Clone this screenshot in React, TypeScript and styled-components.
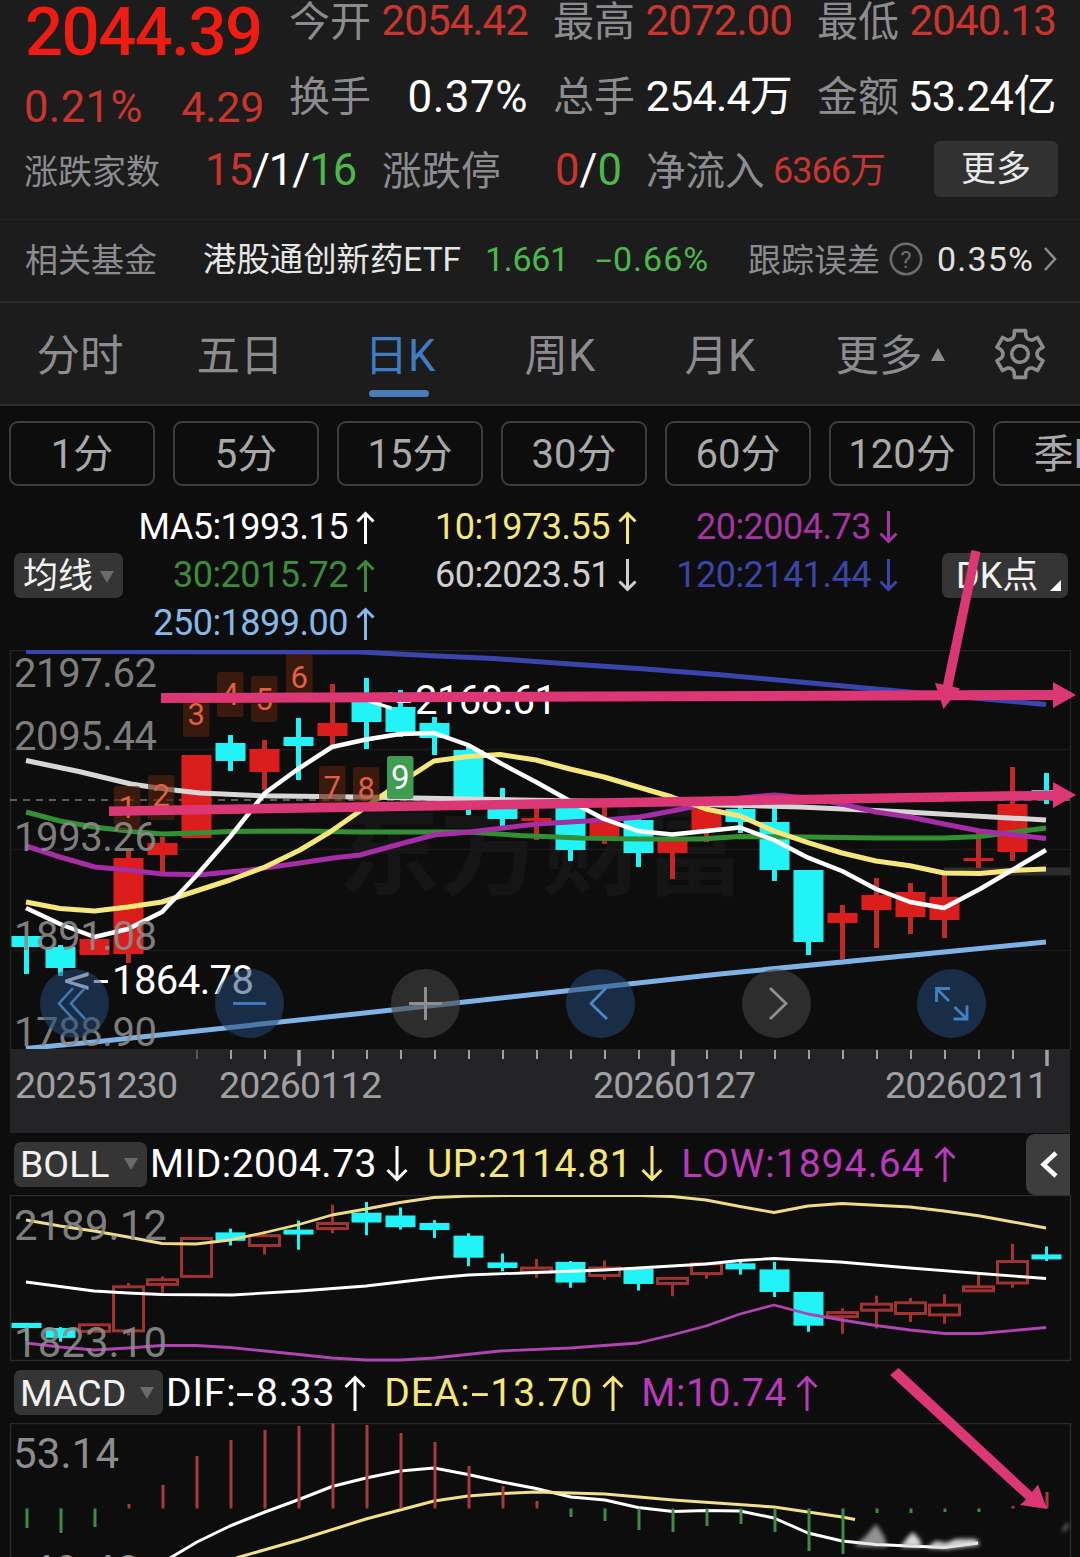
import React from 'react';
import styled, { createGlobalStyle } from 'styled-components';

const RED = '#c8352f';
const GREEN = '#4cb84c';
const CYAN = '#22f3f6';
const YELLOW = '#f5e77a';
const PURPLE = '#a52da5';
const PINK = '#dc3775';
const FONT = "Roboto, 'Noto Sans CJK SC', sans-serif";

const GlobalStyle = createGlobalStyle`
  * { box-sizing: border-box; }
  html, body { margin: 0; padding: 0; background: #0d0d0d; }
  body { width: 1080px; height: 1557px; overflow: hidden; font-family: ${FONT}; }
`;

const Page = styled.main`
  position: relative;
  width: 1080px;
  height: 1557px;
  overflow: hidden;
  background: #0d0d0d;
`;

const Txt = styled.span<{ $c?: string; $s?: number; $ls?: number; $w?: number }>`
  display: inline-block;
  white-space: nowrap;
  line-height: 1;
  color: ${(p) => p.$c ?? '#8c8c90'};
  font-size: ${(p) => p.$s ?? 41}px;
  letter-spacing: ${(p) => p.$ls ?? 0}px;
  font-weight: ${(p) => p.$w ?? 400};
`;
const Label = styled(Txt)<{ $drop?: number }>`
  padding-top: ${(p) => p.$drop ?? 2}px;
`;
/* hyphen stretched to the width of a digit */
const Minus = styled.span`
  display: inline-block;
  width: 0.5em;
  text-align: center;
  transform: scaleX(1.7);
`;

/* ---------- quote header ---------- */
const Quote = styled.section`
  height: 220px;
  background: #1c1c1c;
  border-bottom: 1px solid #232323;
  overflow: hidden;
`;
const QuoteTop = styled.div`
  display: flex;
  height: 132px;
  padding: 0 24px;
`;
const PriceColumn = styled.div`
  width: 265px;
  flex: none;
`;
const Price = styled.div`
  height: 70px;
  padding-left: 1px;
  line-height: 64px;
  font-size: 67px;
  font-weight: 500;
  letter-spacing: -1.5px;
  color: #ee1c12;
`;
const ChangeRow = styled.div`
  display: flex;
  justify-content: space-between;
  width: 240px;
  padding-top: 16px;
`;
const StatGrid = styled.div`
  display: grid;
  grid-template-columns: repeat(3, 239px);
  grid-template-rows: 58px 76px;
  column-gap: 25px;
`;
const Stat = styled.div<{ $first?: boolean }>`
  display: flex;
  justify-content: space-between;
  align-items: flex-start;
  padding-top: ${(p) => (p.$first ? 0 : 17)}px;
`;
const CountRow = styled.div`
  display: flex;
  align-items: center;
  height: 78px;
  padding-left: 24px;
`;
const Cell = styled.div<{ $w: number; $right?: boolean }>`
  display: flex;
  align-items: center;
  justify-content: ${(p) => (p.$right ? 'flex-end' : 'flex-start')};
  width: ${(p) => p.$w}px;
  flex: none;
`;
const MoreButton = styled.button`
  width: 124px;
  height: 56px;
  margin: 0 0 5px 49px;
  padding: 2px 0 0;
  border: 0;
  border-radius: 6px;
  background: #313131;
  color: #e8e8e8;
  font: 400 35px/54px ${FONT};
`;

/* ---------- related fund ---------- */
const FundRow = styled.section`
  display: flex;
  align-items: center;
  height: 83px;
  padding: 0 0 3px 25px;
  background: #1c1c1c;
  border-bottom: 2px solid #2a2a2a;
`;

/* ---------- tabs ---------- */
const Tabs = styled.nav`
  display: grid;
  grid-template-columns: repeat(5, 160px) 180px 80px;
  height: 103px;
  background: #1c1c1c;
  border-bottom: 2px solid #2f2f2f;
`;
const Tab = styled.div<{ $on?: boolean }>`
  display: flex;
  flex-direction: column;
  align-items: center;
  padding-top: 32px;
  font-size: 43.5px;
  line-height: 44px;
  color: ${(p) => (p.$on ? '#3f7cc0' : '#8c8c90')};
`;
const TabLine = styled.i`
  width: 60px;
  height: 7px;
  margin: 11px 0 0 -2px;
  border-radius: 4px;
  background: #4a7db8;
`;
const MoreTab = styled(Tab)`
  flex-direction: row;
  align-items: flex-start;
  justify-content: center;
  gap: 8px;
`;
const UpMark = styled.i`
  margin-top: 13px;
  border: 7.5px solid transparent;
  border-top: 0;
  border-bottom: 13px solid #8c8c90;
`;
const GearCell = styled.div`
  display: flex;
  justify-content: center;
  padding-top: 25px;
`;

/* ---------- periods ---------- */
const Periods = styled.div`
  display: flex;
  gap: 18px;
  height: 97px;
  padding: 15px 0 0 9px;
`;
const Pill = styled.button`
  flex: none;
  width: 146px;
  height: 65px;
  padding: 2px 0 0;
  border: 2px solid #3d3d3d;
  border-radius: 9px;
  background: transparent;
  color: #a9a9ab;
  font: 400 40px/58px ${FONT};
  text-align: center;
`;

/* ---------- moving averages ---------- */
const MaBlock = styled.section`
  display: grid;
  grid-template-columns: 123px 252px 262px 261px 170px;
  grid-template-rows: repeat(3, 48px);
  height: 147px;
`;
const MaCell = styled.div<{ $col: number; $row: number }>`
  grid-column: ${(p) => p.$col};
  grid-row: ${(p) => p.$row};
  display: flex;
  align-items: center;
  justify-content: flex-end;
`;
const ArrowBox = styled.span<{ $c: string }>`
  display: flex;
  align-items: center;
  color: ${(p) => p.$c};
`;
const ArrowGlyph = styled.svg<{ $up?: boolean; $gap: number }>`
  margin-left: ${(p) => p.$gap}px;
  transform: ${(p) => (p.$up ? 'none' : 'rotate(180deg)')};
`;
const DropButton = styled.button<{ $w: number; $cjk?: boolean }>`
  display: flex;
  align-items: center;
  justify-content: space-between;
  width: ${(p) => p.$w}px;
  height: 45px;
  flex: none;
  padding: ${(p) => (p.$cjk ? '2px 9px 0 9px' : '0 9px 0 6px')};
  border: 0;
  border-radius: 7px;
  background: #353535;
  color: #f2f2f2;
  font: 400 ${(p) => (p.$cjk ? 35 : 37.5)}px/42px ${FONT};
`;
const DkButton = styled(DropButton)`
  padding: 0 7px 0 14px;
  font-size: 36px;
`;
const MaMenu = styled.div`
  grid-column: 1;
  grid-row: 2;
  padding: 2px 0 0 14px;
`;
const DkMenu = styled.div`
  grid-column: 5;
  grid-row: 2;
  padding: 2px 0 0 44px;
`;
const DownMark = styled.i`
  border: 7px solid transparent;
  border-bottom: 0;
  border-top: 12px solid #6b6b6b;
`;
const CornerMark = styled.i`
  align-self: flex-end;
  margin-bottom: 7px;
  border-left: 11px solid transparent;
  border-bottom: 11px solid #fff;
`;

/* ---------- charts ---------- */
const Plot = styled.svg`
  display: block;
  font-family: ${FONT};
`;
const MainChart = styled.section`
  position: relative;
  height: 399px;
`;
const Controls = styled.div`
  position: absolute;
  left: 40px;
  top: 319px;
  width: 946px;
  display: flex;
  justify-content: space-between;
`;
const Round = styled.button<{ $blue?: boolean }>`
  width: 69px;
  height: 69px;
  padding: 0;
  border: 0;
  border-radius: 50%;
  background: ${(p) => (p.$blue ? 'rgba(36,74,118,.55)' : 'rgba(66,66,68,.6)')};
`;
const Axis = styled.section`
  height: 84px;
  margin: 0 10px;
  background: #242427;
`;
const Dates = styled.div`
  display: flex;
  padding: 0 0 0 5px;
`;
const DateText = styled.span<{ $gap?: number }>`
  margin-left: ${(p) => p.$gap ?? 0}px;
  width: 161px;
  white-space: nowrap;
  font-size: 37.5px;
  line-height: 38px;
  letter-spacing: -0.8px;
  color: #a0a0a3;
`;
const IndicatorBar = styled.section<{ $h: number }>`
  display: flex;
  align-items: center;
  height: ${(p) => p.$h}px;
  padding-left: 14px;
`;
const Reading = styled.div<{ $c: string; $gap: number; $ls?: number }>`
  display: flex;
  align-items: center;
  margin-left: ${(p) => p.$gap}px;
  font-size: 39px;
  line-height: 44px;
  letter-spacing: ${(p) => p.$ls ?? 0}px;
  white-space: nowrap;
  color: ${(p) => p.$c};
`;
const Collapse = styled.button`
  align-self: flex-start;
  width: 44px;
  height: 61px;
  margin: 1px 10px 0 auto;
  padding: 0;
  border: 0;
  border-radius: 9px 0 0 9px;
  background: #3d3d3d;
`;
const Annotations = styled.svg`
  position: absolute;
  left: 0;
  top: 0;
  pointer-events: none;
`;

const TrendArrow = ({ up, c, big }: { up?: boolean; c: string; big?: boolean }) => {
  const w = big ? 22 : 19;
  const h = big ? 36 : 33;
  return (
    <ArrowBox $c={c}>
      <ArrowGlyph $up={up} $gap={big ? 9 : 8} width={w} height={h} viewBox={`0 0 ${w} ${h}`} fill="none" stroke="currentColor" strokeWidth={3}>
        <path d={`M${w / 2} ${h}V3M1.5 ${w / 2 + 1}L${w / 2} 2.5L${w - 1.5} ${w / 2 + 1}`} />
      </ArrowGlyph>
    </ArrowBox>
  );
};

/* six-toothed gear with shallow curved valleys */
const gearPath = () => {
  const at = (deg: number, r: number) => {
    const t = (deg * Math.PI) / 180;
    return `${(26 + r * Math.cos(t)).toFixed(2)} ${(26 + r * Math.sin(t)).toFixed(2)}`;
  };
  let d = '';
  for (let i = 0; i < 6; i++) {
    const a = -90 + i * 60;
    d += `${i ? 'L' : 'M'}${at(a - 18, 19)}L${at(a - 13.5, 24)}L${at(a + 13.5, 24)}L${at(a + 18, 19)}Q${at(a + 30, 15.5)} ${at(a + 42, 19)}`;
  }
  return `${d}Z`;
};

/* up flag, body top, body bottom, wick top, wick bottom */
type Candle = [number, number, number, number, number];
const candles: Candle[] = [
  [0, 936, 947, 936, 974], [0, 947, 968, 945, 976], [1, 939, 955, 939, 955], [1, 858, 954, 851, 963],
  [1, 843, 855, 837, 872], [1, 755, 838, 755, 838], [0, 743, 761, 735, 771], [1, 749, 772, 740, 790],
  [0, 737, 746, 718, 780], [1, 723, 736, 684, 745], [0, 701, 722, 678, 749], [0, 707, 732, 690, 737],
  [0, 723, 738, 717, 755], [0, 750, 797, 745, 815], [0, 807, 819, 788, 826], [1, 818, 821, 800, 840],
  [0, 806, 850, 804, 861], [1, 818, 836, 803, 844], [0, 820, 853, 818, 867], [1, 840, 853, 838, 879],
  [1, 809, 832, 806, 842], [0, 809, 822, 805, 833], [0, 822, 870, 806, 881], [0, 870, 942, 870, 955],
  [1, 913, 923, 905, 959], [1, 895, 910, 878, 948], [1, 892, 917, 883, 934], [1, 897, 920, 875, 938],
  [1, 858, 861, 833, 868], [1, 804, 852, 767, 861], [0, 790, 793, 773, 804],
];
const cx = (i: number) => 26.5 + 34 * i;
const by = (v: number) => 1238 + (v - 755) * 0.469;

const ma = {
  m120: '26,651.5 360,652 427,655.5 493,658.5 570,664 645,669 720,674.7 887,690 1046,704.5',
  m60: '26,760.5 80,771.7 131,784 165,789 200,793 260,795.7 360,797 520,800 640,802 720,805 800,807 907,812 1046,820',
  m30: '26,812 60,821 94,827 128,831 162,834 196,833 230,831.5 300,831 360,832 468,832 520,835.5 580,838 640,839 700,839 740,836.5 808,837 876,838 944,838 980,836.5 1046,828',
  m20: '26,846 60,857 95,867 128,870 162,874 200,874.7 250,870 300,863 333,858 360,855 400,844 434,835 470,832 503,828 536,824 570,822 604,820 640,817 672,811 706,804 740,798 774,795 808,798 842,804 876,812 910,817 944,824 980,831 1046,838.5',
  m10: '26,902 60,908.5 94.5,911 128,907 162,902 196,891 230,880 265,867 300,850 330,832 360,811 400,783 434,761 468,756.5 500,754.5 536,760 570,769 604,777 638,787 672,797 706,809 740,816 774,831 808,842.7 842,853 876,861 910,865.7 944,873 980,873.5 1013,870.5 1046,869',
  m5: '26,908 60,924 94.5,937 128,929 162,912 196,876 230,837 265,793 298,769 332,747 366,739.5 400,734 434,733 468,745 502,764 536,782 570,801 604,819 638,831 672,834.5 706,831 740,827.5 774,840 808,857.7 842,871 876,889 910,902 944,908 980,889 1046,850',
  m250: '26,1048.5 94,1042 360,1013.5 720,974 1046,942',
};

const boll = {
  up: '26,1220 60,1226 94,1231 128,1237 162,1243.5 196,1244 230,1240 265,1232.5 299,1224.5 332,1215 366,1209 400,1202.5 434,1197.5 468,1196 536,1195.5 640,1195.5 672,1196.5 706,1200 740,1206.5 774,1212.5 808,1206 842,1203.5 910,1207 944,1211 980,1216 1013,1222 1046,1228',
  mid: '26,1282 60,1286.5 94,1291 128,1293 162,1294.5 232,1295 300,1291 366,1286 434,1278 468,1275 536,1272.5 604,1270 638,1268 672,1266 706,1264 740,1260.5 774,1258.5 840,1262 910,1268 980,1273.5 1046,1278.5',
  low: '26,1343 60,1347 94,1350 128,1348 162,1345.5 196,1345.5 230,1347.5 265,1351 299,1354.5 332,1358 366,1360 400,1360 434,1358 500,1351 570,1348 638,1343 672,1335 706,1326 740,1314 774,1305 808,1314 842,1320 876,1325.5 910,1330 944,1333.5 980,1333.5 1046,1327.5',
};

const macdBars = [1528, 1533, 1527, 1504, 1485, 1456, 1440, 1430, 1426, 1423.5, 1425, 1433, 1442, 1466, 1486, 1501,
  1517, 1521, 1530, 1532, 1526, 1524, 1532, 1551, 1554, 1513, 1513, 1512, 1512, 1506, 1492];

const tags: [string, number, number, number, number][] = [
  ['1', 114, 786, 44, 818], ['2', 148, 775, 45, 806], ['3', 183, 699, 38, 724.5], ['4', 217, 672, 45, 704.5],
  ['5', 251, 676, 46, 710], ['6', 286, 654, 44, 688], ['7', 319, 766, 38, 798], ['8', 353, 767, 36, 798.5],
];

const priceLabels: [string, number][] = [['2197.62', 687], ['2095.44', 749.5], ['1993.26', 850.5], ['1891.08', 949.5], ['1788.90', 1046]];
const ticks = Array.from({ length: 26 }, (_, k) => k + 5);

const Line = ({ pts, c, w }: { pts: string; c: string; w: number }) => (
  <polyline points={pts} fill="none" stroke={c} strokeWidth={w} strokeLinejoin="round" />
);

const Extreme = ({ x, y, value }: { x: number; y: number; value: string }) => (
  <text y={y} fontSize={40} fill="#fff">
    <tspan x={x} textLength={46} lengthAdjust="spacingAndGlyphs">&lt;-</tspan>
    <tspan x={x + 49} textLength={142}>{value}</tspan>
  </text>
);

export default function App() {
  return (
    <Page>
      <GlobalStyle />

      <Quote>
        <QuoteTop>
          <PriceColumn>
            <Price>2044.39</Price>
            <ChangeRow>
              <Txt $c={RED} $s={43.5} $ls={0.4}>0.21%</Txt>
              <Txt $c={RED} $s={43} $ls={-0.3}>4.29</Txt>
            </ChangeRow>
          </PriceColumn>
          <StatGrid>
            <Stat $first><Label>今开</Label><Txt $c={RED} $s={42} $ls={-0.9}>2054.42</Txt></Stat>
            <Stat $first><Label>最高</Label><Txt $c={RED} $s={42} $ls={-0.9}>2072.00</Txt></Stat>
            <Stat $first><Label>最低</Label><Txt $c={RED} $s={42} $ls={-0.9}>2040.13</Txt></Stat>
            <Stat><Label>换手</Label><Txt $c="#fff" $s={44} $ls={0.5}>0.37%</Txt></Stat>
            <Stat><Label>总手</Label><Txt $c="#fff" $s={43} $ls={-0.8}>254.4万</Txt></Stat>
            <Stat><Label>金额</Label><Txt $c="#fff" $s={43} $ls={-0.5}>53.24亿</Txt></Stat>
          </StatGrid>
        </QuoteTop>
        <CountRow>
          <Cell $w={181}><Label $s={34}>涨跌家数</Label></Cell>
          <Cell $w={177}>
            <Txt $c={RED} $s={43.5} $ls={-1}>15</Txt><Txt $c="#fff" $s={43.5} $ls={-1}>/1/</Txt><Txt $c={GREEN} $s={43.5} $ls={-1}>16</Txt>
          </Cell>
          <Cell $w={173}><Label $s={39.5}>涨跌停</Label></Cell>
          <Cell $w={91}>
            <Txt $c={RED} $s={43.5}>0</Txt><Txt $c="#fff" $s={43.5}>/</Txt><Txt $c={GREEN} $s={43.5}>0</Txt>
          </Cell>
          <Cell $w={127}><Label $s={39.5}>净流入</Label></Cell>
          <Cell $w={112}><Txt $c={RED} $s={36} $ls={-1}>6366万</Txt></Cell>
          <MoreButton>更多</MoreButton>
        </CountRow>
      </Quote>

      <FundRow>
        <Cell $w={178}><Label $s={33}>相关基金</Label></Cell>
        <Cell $w={282}><Label $c="#e6e6e6" $s={33.4}>港股通创新药ETF</Label></Cell>
        <Cell $w={111}><Txt $c={GREEN} $s={34} $ls={-0.3}>1.661</Txt></Cell>
        <Cell $w={152}><Txt $c={GREEN} $s={34} $ls={1}><Minus>-</Minus>0.66%</Txt></Cell>
        <Cell $w={141}><Label $s={33}>跟踪误差</Label></Cell>
        <Cell $w={48}>
          <svg width="34" height="34" viewBox="0 0 34 34">
            <circle cx="17" cy="17" r="15.2" fill="none" stroke="#6c6c6f" strokeWidth="2.6" />
            <text x="17" y="25.5" fontSize="24" textAnchor="middle" fill="#6c6c6f">?</text>
          </svg>
        </Cell>
        <Cell $w={105}><Txt $c="#e0e0e0" $s={34} $ls={1.2}>0.35%</Txt></Cell>
        <svg width="16" height="28" viewBox="0 0 16 28" fill="none" stroke="#8a8a8a" strokeWidth="2.6"><path d="M3 3L13 14L3 25" /></svg>
      </FundRow>

      <Tabs>
        <Tab>分时</Tab>
        <Tab>五日</Tab>
        <Tab $on>日K<TabLine /></Tab>
        <Tab>周K</Tab>
        <Tab>月K</Tab>
        <MoreTab>更多<UpMark /></MoreTab>
        <GearCell>
          <svg width="52" height="52" viewBox="0 0 52 52" fill="none" stroke="#8c8c90" strokeWidth="3.6" strokeLinejoin="round">
            <path d={gearPath()} />
            <circle cx="26" cy="26" r="8.3" />
          </svg>
        </GearCell>
      </Tabs>

      <Periods>
        {['1分', '5分', '15分', '30分', '60分', '120分', '季K'].map((p) => <Pill key={p}>{p}</Pill>)}
      </Periods>

      <MaBlock>
        <MaMenu><DropButton $w={109} $cjk>均线<DownMark /></DropButton></MaMenu>
        <MaCell $col={2} $row={1}><Txt $c="#fff" $s={36} $ls={-0.5}>MA5:1993.15</Txt><TrendArrow up c="#fff" /></MaCell>
        <MaCell $col={3} $row={1}><Txt $c={YELLOW} $s={36} $ls={-0.5}>10:1973.55</Txt><TrendArrow up c={YELLOW} /></MaCell>
        <MaCell $col={4} $row={1}><Txt $c="#a535a2" $s={36} $ls={-0.5}>20:2004.73</Txt><TrendArrow c="#a535a2" /></MaCell>
        <MaCell $col={2} $row={2}><Txt $c="#3c8a3c" $s={36} $ls={-0.5}>30:2015.72</Txt><TrendArrow up c="#3c8a3c" /></MaCell>
        <MaCell $col={3} $row={2}><Txt $c="#cfcfcf" $s={36} $ls={-0.5}>60:2023.51</Txt><TrendArrow c="#cfcfcf" /></MaCell>
        <MaCell $col={4} $row={2}><Txt $c="#3a45a8" $s={36} $ls={-0.5}>120:2141.44</Txt><TrendArrow c="#3a45a8" /></MaCell>
        <MaCell $col={2} $row={3}><Txt $c="#86b9ea" $s={36} $ls={-0.5}>250:1899.00</Txt><TrendArrow up c="#86b9ea" /></MaCell>
        <DkMenu><DkButton $w={126} $cjk>DK点<CornerMark /></DkButton></DkMenu>
      </MaBlock>

      <MainChart>
        <Plot width="1080" height="399" viewBox="0 650 1080 399">
          <text x="338" y="887" fontSize="102" fontWeight="700" fill="#151515">东方财富</text>
          <path d="M10.5 1049V650.5H1070.5V1049" fill="none" stroke="#242424" strokeWidth="1.5" />
          <path d="M10 749.5H1070M10 849.5H1070M10 950.5H1070" stroke="#1b1b1b" strokeWidth="1.5" />
          <path d="M944 871.5H1070" stroke="#2c2c2c" strokeWidth="8" />
          <path d="M10 800H1070" stroke="#7d7468" strokeWidth="1.5" strokeDasharray="7 6" />
          {candles.map(([up, t, b, wt, wb], i) => (
            <g key={i} fill={up ? '#db1d1b' : CYAN}>
              <rect x={cx(i) - 2.5} y={wt} width={5} height={wb - wt} fill={up ? '#bf2a28' : CYAN} />
              <rect x={cx(i) - 15} y={t} width={30} height={b - t} />
            </g>
          ))}
          <Line pts={ma.m250} c="#7fb2e4" w={5} />
          <Line pts={ma.m120} c="#3b44ad" w={5} />
          <Line pts={ma.m60} c="#d9d6d6" w={5} />
          <Line pts={ma.m30} c="#338f33" w={5} />
          <Line pts={ma.m20} c={PURPLE} w={5} />
          <Line pts={ma.m10} c={YELLOW} w={5} />
          <Line pts={ma.m5} c="#fff" w={4.5} />
          {tags.map(([n, x, y, h, base]) => (
            <g key={n}>
              <rect x={x} y={y} width={26.5} height={h} rx={3} fill="#55240f" fillOpacity={0.62} />
              <text x={x + 13.2} y={base} fontSize={31} textAnchor="middle" fill="#e2613f">{n}</text>
            </g>
          ))}
          <rect x={387} y={756} width={26.5} height={43} rx={3} fill="#3f9c50" />
          <text x={400.3} y={789} fontSize={33} textAnchor="middle" fill="#fff">9</text>
          {priceLabels.map(([t, y]) => (
            <text key={t} x={14} y={y} fontSize={40} textLength={143} fill="#8d8d8d" fillOpacity={0.9}>{t}</text>
          ))}
          <Extreme x={366} y={714} value="2168.61" />
          <Extreme x={63} y={993.5} value="1864.78" />
        </Plot>
        <Controls>
          <Round $blue><svg width="69" height="69" fill="none" stroke="#3f78b8" strokeWidth="2.6"><path d="M33 19L19 34.5L33 50M45 19L31 34.5L45 50" /></svg></Round>
          <Round $blue><svg width="69" height="69" fill="none" stroke="#3f78b8" strokeWidth="2.8"><path d="M18 34.5H51" /></svg></Round>
          <Round><svg width="69" height="69" fill="none" stroke="#8f8f8f" strokeWidth="3"><path d="M18 34.5H51M34.5 18V51" /></svg></Round>
          <Round $blue><svg width="69" height="69" fill="none" stroke="#4d86c6" strokeWidth="2.8"><path d="M40 19L25 34.5L41 50" /></svg></Round>
          <Round><svg width="69" height="69" fill="none" stroke="#8f8f8f" strokeWidth="2.8"><path d="M28 19L44 34.5L28 50" /></svg></Round>
          <Round $blue><svg width="69" height="69" fill="none" stroke="#3f82c4" strokeWidth="2.8"><path d="M33 19.5H19.5V33M19.5 19.5L32 32M36.5 50H50V36.5M50 50L37.5 38" /></svg></Round>
        </Controls>
      </MainChart>

      <Axis>
        <Plot width="1060" height="17" viewBox="10 1049 1060 17">
          {ticks.map((i) => {
            const major = i === 8 || i === 19 || i === 30;
            return <path key={i} d={`M${cx(i) + 0.5} 1050V${major ? 1066 : 1059}`} stroke={i === 5 ? '#55555a' : '#a0a0a3'} strokeWidth={major ? 3.5 : 2} />;
          })}
        </Plot>
        <Dates>
          <DateText>20251230</DateText>
          <DateText $gap={43}>20260112</DateText>
          <DateText $gap={213}>20260127</DateText>
          <DateText $gap={131}>20260211</DateText>
        </Dates>
      </Axis>

      <IndicatorBar $h={62}>
        <DropButton $w={133}>BOLL<DownMark /></DropButton>
        <Reading $c="#fff" $gap={3} $ls={0.5}>MID:2004.73<TrendArrow big c="#fff" /></Reading>
        <Reading $c={YELLOW} $gap={19} $ls={0.4}>UP:2114.81<TrendArrow big c={YELLOW} /></Reading>
        <Reading $c="#b93ab9" $gap={18} $ls={1}>LOW:1894.64<TrendArrow big up c="#b93ab9" /></Reading>
        <Collapse><svg width="44" height="61" fill="none" stroke="#fff" strokeWidth="4.5"><path d="M30 19L17.5 30.5L30 42" /></svg></Collapse>
      </IndicatorBar>

      <Plot width="1080" height="167" viewBox="0 1195 1080 167">
        <rect x="10.5" y="1195.5" width="1060" height="165" fill="none" stroke="#2a2a2a" strokeWidth="1.5" />
        {candles.map(([up, t, b, wt, wb], i) => {
          const top = by(t);
          const h = Math.max(by(b) - top, 5);
          const x = cx(i);
          return up ? (
            <g key={i} stroke="#a03331" strokeWidth={3} fill="none">
              <path d={`M${x} ${by(wt)}V${top}M${x} ${top + h}V${Math.max(by(wb), top + h)}`} />
              <rect x={x - 15} y={top + 0.5} width={30} height={Math.max(h - 1, 3)} />
            </g>
          ) : (
            <g key={i} fill={CYAN}>
              <rect x={x - 1.5} y={by(wt)} width={3} height={by(wb) - by(wt)} />
              <rect x={x - 15} y={top} width={30} height={h} />
            </g>
          );
        })}
        <Line pts={boll.up} c="#f0dc86" w={2.8} />
        <Line pts={boll.mid} c="#fff" w={2.8} />
        <Line pts={boll.low} c="#b044b0" w={2.8} />
        <text x={14} y={1240} fontSize={42} textLength={153} fill="#8d8d8d" fillOpacity={0.9}>2189.12</text>
        <text x={14} y={1357} fontSize={42} textLength={153} fill="#8d8d8d" fillOpacity={0.9}>1823.10</text>
      </Plot>

      <IndicatorBar $h={61}>
        <DropButton $w={149}>MACD<DownMark /></DropButton>
        <Reading $c="#fff" $gap={3} $ls={0.8}><span>DIF:<Minus>-</Minus>8.33</span><TrendArrow big up c="#fff" /></Reading>
        <Reading $c={YELLOW} $gap={18} $ls={1}><span>DEA:<Minus>-</Minus>13.70</span><TrendArrow big up c={YELLOW} /></Reading>
        <Reading $c="#b93ab9" $gap={17} $ls={0.6}>M:10.74<TrendArrow big up c="#b93ab9" /></Reading>
      </IndicatorBar>

      <Plot width="1080" height="134" viewBox="0 1423 1080 134">
        <defs>
          <filter id="soft" x="-20%" y="-50%" width="140%" height="200%"><feGaussianBlur stdDeviation="2" /></filter>
        </defs>
        <path d="M10.5 1557V1423.5H1070.5V1557" fill="none" stroke="#2a2a2a" strokeWidth="1.5" />
        <Line pts="170,1558 197,1542 230,1526 265,1512 299,1499.5 332,1486.5 366,1478 400,1471 434,1468 468,1474.5 502,1482 536,1488.5 571,1497 605,1500 638,1507.5 673,1511.5 706,1510.5 740,1511 774,1518 808,1533 842,1541 876,1544.5 944,1547.5 978,1543" c="#fff" w={3} />
        <Line pts="236,1558 299,1540 366,1519 400,1510 434,1501 468,1496 502,1493.5 536,1492 605,1494 673,1500 774,1507 808,1512 842,1517 855,1519.5" c="#f3e08a" w={3} />
        {macdBars.map((v, i) => (
          <path key={i} d={`M${cx(i) + 0.5} 1508.5V${v}`} strokeWidth={3} stroke={v > 1508 ? '#3f8a45' : '#a83a3a'} />
        ))}
        <g filter="url(#soft)" fill="#d8d8d8">
          <path d="M854 1546L866 1536L876 1524L884 1536L887 1547Z" opacity="0.65" />
          <path d="M900 1547L908 1537L913 1532L920 1540L922 1547Z" />
          <path d="M926 1548L936 1541L946 1543L956 1539L976 1539L980 1545L946 1549Z" />
          <path d="M1062 1532L1066 1524L1069 1523L1066 1530Z" opacity="0.6" />
        </g>
        <text x={13} y={1468} fontSize={42} textLength={106} fill="#8d8d8d">53.14</text>
        <text x={18} y={1585} fontSize={42} textLength={122} fill="#8d8d8d">-49.48</text>
      </Plot>

      <Annotations width="1080" height="1557" viewBox="0 0 1080 1557" fill={PINK} stroke="none">
        <path d="M161 693L1053 690V682L1076 695L1053 708V700L161 703Z" />
        <path d="M109 806.5L1053 790.5V782L1076 795L1053 808V800L109 816Z" />
        <path d="M971.5 550L980.5 552L952.5 686.5L960 688.5L943.5 709L935 683L943 684.5Z" />
        <path d="M898.5 1368L1032 1492L1038 1484.5L1047 1509L1020 1505L1026 1499.5L890 1375Z" />
      </Annotations>
    </Page>
  );
}
